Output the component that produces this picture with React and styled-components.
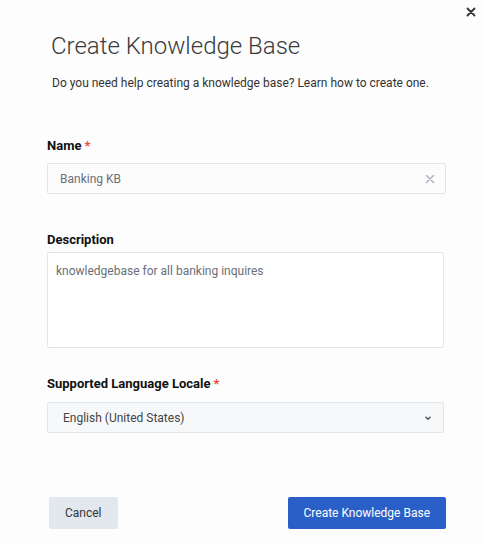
import React from 'react';
import styled, { createGlobalStyle } from 'styled-components';

const GlobalStyle = createGlobalStyle`
  html, body {
    margin: 0;
    padding: 0;
    background: #fdfdfd;
    font-family: Roboto, 'Liberation Sans', Arial, sans-serif;
  }
`;

const Modal = styled.div`
  position: relative;
  width: 484px;
  height: 544px;
  box-sizing: border-box;
  padding: 0 38px 0 47px;
  display: flex;
  flex-direction: column;
  background: #fdfdfd;
`;

const CloseButton = styled.button`
  position: absolute;
  top: 5px;
  right: 6px;
  width: 14px;
  height: 14px;
  padding: 0;
  border: none;
  background: none;
  display: flex;
  align-items: center;
  justify-content: center;
  color: #333;
`;

const Header = styled.div`
  padding: 31px 0 0 4px;
`;

const Title = styled.h1`
  margin: 0;
  font-size: 24px;
  font-weight: 300;
  color: #3a3a3a;
  line-height: 30px;
`;

const Subtitle = styled.p`
  margin: 14px 0 0 1px;
  font-size: 12px;
  color: #333;
  line-height: 16px;
`;

const Field = styled.div`
  margin-top: ${(props) => props.top};
  display: flex;
  flex-direction: column;
`;

const Label = styled.label`
  font-size: 13px;
  font-weight: 700;
  color: #111;
  line-height: 16px;
  margin-bottom: ${(props) => props.gap || '10px'};
`;

const Required = styled.span`
  color: #ea4b34;
  margin-left: 3px;
`;

const InputBox = styled.div`
  height: 31px;
  box-sizing: border-box;
  border: 1px solid #e1e5ec;
  border-radius: 2px;
  background: ${(props) => props.bg || '#fcfcfd'};
  display: flex;
  align-items: center;
  padding: 0 ${(props) => props.padRight || '10px'} 0 ${(props) => props.padLeft || '12px'};
  margin-right: ${(props) => props.mr || '0'};
`;

const InputText = styled.span`
  flex: 1;
  font-size: 12px;
  color: ${(props) => props.color || '#6b6f78'};
`;

const TextArea = styled.div`
  height: 96px;
  box-sizing: border-box;
  border: 1px solid #e1e5ec;
  border-radius: 2px;
  background: #fff;
  margin-right: 2px;
  padding: 10px 8px;
  font-size: 12px;
  color: #6b6f78;
  line-height: 16px;
`;

const Footer = styled.div`
  margin-top: auto;
  margin-bottom: 15px;
  display: flex;
  justify-content: space-between;
  align-items: center;
  padding-left: 2px;
`;

const Button = styled.button`
  height: 32px;
  border: none;
  border-radius: 2px;
  font-family: Roboto, 'Liberation Sans', Arial, sans-serif;
  font-size: 12px;
  padding: 0 16px;
  background: ${(props) => (props.primary ? '#2b5fc8' : '#e3e8ef')};
  color: ${(props) => (props.primary ? '#fff' : '#333')};
  margin-top: ${(props) => (props.primary ? '1px' : '0')};
`;

const XIcon = ({ size, color, width }) => (
  <svg width={size} height={size} viewBox="0 0 10 10">
    <path d="M1.5 1.5 L8.5 8.5 M8.5 1.5 L1.5 8.5" stroke={color} strokeWidth={width} strokeLinecap="round" />
  </svg>
);

const Chevron = () => (
  <svg width="8" height="6" viewBox="0 0 8 6">
    <path d="M1.5 1.8 L4 4.3 L6.5 1.8" stroke="#555" strokeWidth="1.4" fill="none" />
  </svg>
);

const App = () => (
  <>
    <GlobalStyle />
    <Modal>
      <CloseButton>
        <XIcon size={10} color="#333" width={1.8} />
      </CloseButton>
      <Header>
        <Title>Create Knowledge Base</Title>
        <Subtitle>Do you need help creating a knowledge base? Learn how to create one.</Subtitle>
      </Header>

      <Field top="47px">
        <Label gap="9px">
          Name<Required>*</Required>
        </Label>
        <InputBox>
          <InputText>Banking KB</InputText>
          <XIcon size={10} color="#a8b0bc" width={1.4} />
        </InputBox>
      </Field>

      <Field top="38px">
        <Label gap="4px">Description</Label>
        <TextArea>knowledgebase for all banking inquires</TextArea>
      </Field>

      <Field top="28px">
        <Label>
          Supported Language Locale<Required>*</Required>
        </Label>
        <InputBox bg="#f7f8fa" padLeft="15px" padRight="11px" mr="2px">
          <InputText color="#444">English (United States)</InputText>
          <Chevron />
        </InputBox>
      </Field>

      <Footer>
        <Button>Cancel</Button>
        <Button primary>Create Knowledge Base</Button>
      </Footer>
    </Modal>
  </>
);

export default App;
